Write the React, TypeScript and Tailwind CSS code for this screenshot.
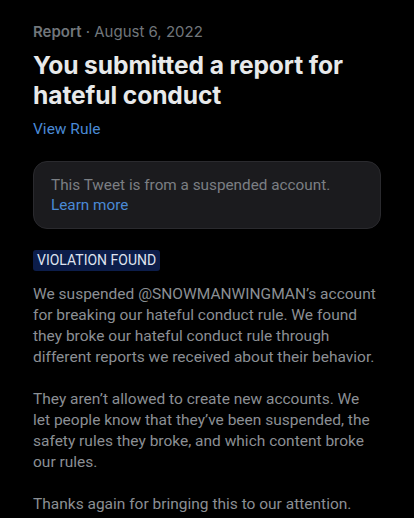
export default function App() {
  return (
    <div className="w-[414px] h-[518px] bg-black overflow-hidden pl-[33px] pr-[20px] pt-[21px]" style={{ fontFamily: "Roboto, 'Noto Sans', sans-serif" }}>
      <div className="text-[15px] leading-[22px] text-[#71767b]" style={{ fontFamily: "Inter, Roboto, sans-serif" }}>
        <span className="font-semibold">Report</span> · August 6, 2022
      </div>
      <h1 className="mt-[7px] w-[350px] text-[24.6px] leading-[30px] font-bold text-[#e7e9ea] tracking-[-0.1px]" style={{ fontFamily: "Inter, Roboto, sans-serif" }}>
        You submitted a report for hateful conduct
      </h1>
      <div className="mt-[8px] text-[15.5px] leading-[22px] text-[#4a8ad6]">View Rule</div>
      <div className="mt-[21px] w-[348px] rounded-[14px] border border-[#2a2a2e] bg-[#1b1b1e] px-[17px] pt-[13px] pb-[13px]">
        <div className="text-[15.3px] leading-[20px] text-[#7b7f84]">This Tweet is from a suspended account.</div>
        <div className="text-[15.3px] leading-[20px] text-[#4a8ad6]">Learn more</div>
      </div>
      <div className="mt-[21px] flex">
        <span className="rounded-[3px] bg-[#0c1d4a] px-[4px] text-[14px] leading-[21px] text-[#dfe3ee]">VIOLATION FOUND</span>
      </div>
      <div className="mt-[12.5px] text-[15.5px] leading-[21px] text-[#8b8f94] w-[361px]">
        <p>
          We suspended @SNOWMANWINGMAN’s account<br />
          for breaking our hateful conduct rule. We found<br />
          they broke our hateful conduct rule through<br />
          different reports we received about their behavior.
        </p>
        <p className="mt-[21px]">
          They aren’t allowed to create new accounts. We<br />
          let people know that they’ve been suspended, the<br />
          safety rules they broke, and which content broke<br />
          our rules.
        </p>
        <p className="mt-[21px]">Thanks again for bringing this to our attention.</p>
      </div>
    </div>
  );
}
